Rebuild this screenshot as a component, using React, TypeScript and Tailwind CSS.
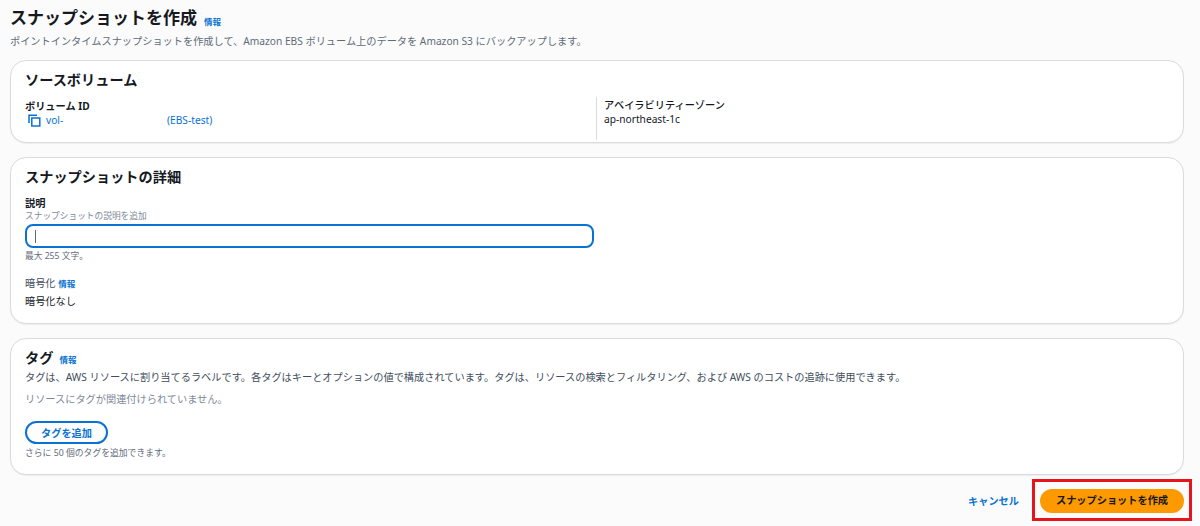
export default function App() {
  const font = { fontFamily: '"Noto Sans", "Noto Sans CJK JP", "Liberation Sans", sans-serif' };
  const card = "rounded-2xl border border-[#d9dbdd] bg-white shadow-[0_1px_1px_rgba(0,0,0,0.06)] mr-[16px]";
  return (
    <div style={font} className="w-[1200px] h-[526px] overflow-hidden bg-[#fbfbfb] text-[#16191f] pl-[10px] relative">
      <div className="h-[33px] flex items-end pb-[3px]">
        <h1 className="text-[17px] leading-[24px] font-bold">スナップショットを作成</h1>
        <a className="text-[8.5px] leading-[16px] font-bold text-[#0972d3] ml-[7px]">情報</a>
      </div>
      <p className="text-[10.2px] leading-[14px] text-[#5f6b7a] h-[27px] pt-[1px]">
        ポイントインタイムスナップショットを作成して、Amazon EBS ボリューム上のデータを Amazon S3 にバックアップします。
      </p>

      <section className={`${card} h-[83px] px-[14px] pt-[9px]`}>
        <h2 className="text-[14.2px] leading-[20px] font-bold">ソースボリューム</h2>
        <div className="grid grid-cols-2 mt-[7px] h-[43px]">
          <div className="pt-[2px]">
            <div className="text-[10.2px] leading-[14px] font-bold">ボリューム ID</div>
            <div className="flex items-center text-[10.2px] leading-[14px] text-[#0972d3]">
              <svg width="13" height="13" viewBox="0 0 13 13" fill="none" stroke="#0972d3" strokeWidth="1.5" className="ml-[3px] mr-[5px]">
                <path d="M1 9V1.2H9" />
                <rect x="3.8" y="4" width="8" height="8" />
              </svg>
              <span className="w-[19px] whitespace-nowrap">vol-</span>
              <span className="ml-[102px]">(EBS-test)</span>
            </div>
          </div>
          <div className="border-l border-[#d9dbdd] pl-[7px] ml-[-1px] pt-[1px]">
            <div className="text-[10.2px] leading-[14px] font-medium">アベイラビリティーゾーン</div>
            <div className="text-[10.2px] leading-[14px]">ap-northeast-1c</div>
          </div>
        </div>
      </section>

      <section className={`${card} h-[167px] mt-[14px] px-[14px] pt-[9px]`}>
        <h2 className="text-[14.2px] leading-[20px] font-bold">スナップショットの詳細</h2>
        <div className="text-[10.2px] leading-[14px] font-bold mt-[9px]">説明</div>
        <div className="text-[8.7px] leading-[12px] text-[#7d8998]">スナップショットの説明を追加</div>
        <div className="w-[569px] h-[24px] mt-[2px] rounded-lg border-2 border-[#0972d3] bg-white flex items-center pl-[8px]">
          <span className="w-px h-[13px] bg-[#5f6b7a]" />
        </div>
        <div className="text-[8.7px] leading-[14px] text-[#5f6b7a] mt-[1px]">最大 255 文字。</div>
        <div className="text-[10.2px] leading-[14px] mt-[13px] text-[#414d5c]">
          暗号化 <a className="font-bold text-[#0972d3] text-[8.5px]">情報</a>
        </div>
        <div className="text-[10.2px] leading-[14px] mt-[3px]">暗号化なし</div>
      </section>

      <section className={`${card} h-[137px] mt-[14px] px-[14px] pt-[9px]`}>
        <div className="flex items-center">
          <h2 className="text-[14.2px] leading-[20px] font-bold">タグ</h2>
          <a className="text-[8.5px] leading-[16px] font-bold text-[#0972d3] ml-[6px] mt-[4px]">情報</a>
        </div>
        <p className="text-[10.2px] leading-[14px] text-[#414d5c] mt-[2px]">
          タグは、AWS リソースに割り当てるラベルです。各タグはキーとオプションの値で構成されています。タグは、リソースの検索とフィルタリング、および AWS のコストの追跡に使用できます。
        </p>
        <p className="text-[10.2px] leading-[14px] text-[#7d8998] mt-[8px]">リソースにタグが関連付けられていません。</p>
        <button className="block w-[83px] h-[23px] mt-[15px] rounded-full border-2 border-[#0972d3] text-[#0972d3] text-[10.2px] font-bold leading-[14px]">
          タグを追加
        </button>
        <div className="text-[8.8px] leading-[14px] text-[#5f6b7a] mt-[2px]">さらに 50 個のタグを追加できます。</div>
      </section>

      <div className="flex items-center justify-end mr-[16px] mt-[14px]">
        <a className="text-[#0972d3] text-[10.2px] font-bold leading-[24px] mr-[21px]">キャンセル</a>
        <button className="w-[144px] h-[24px] rounded-full bg-[#ff9900] text-[#16191f] text-[10.2px] font-bold">
          スナップショットを作成
        </button>
      </div>
      <div className="absolute left-[1032px] top-[479px] w-[160px] h-[42px] border-[3px] border-[#e8141c]" />
    </div>
  );
}
